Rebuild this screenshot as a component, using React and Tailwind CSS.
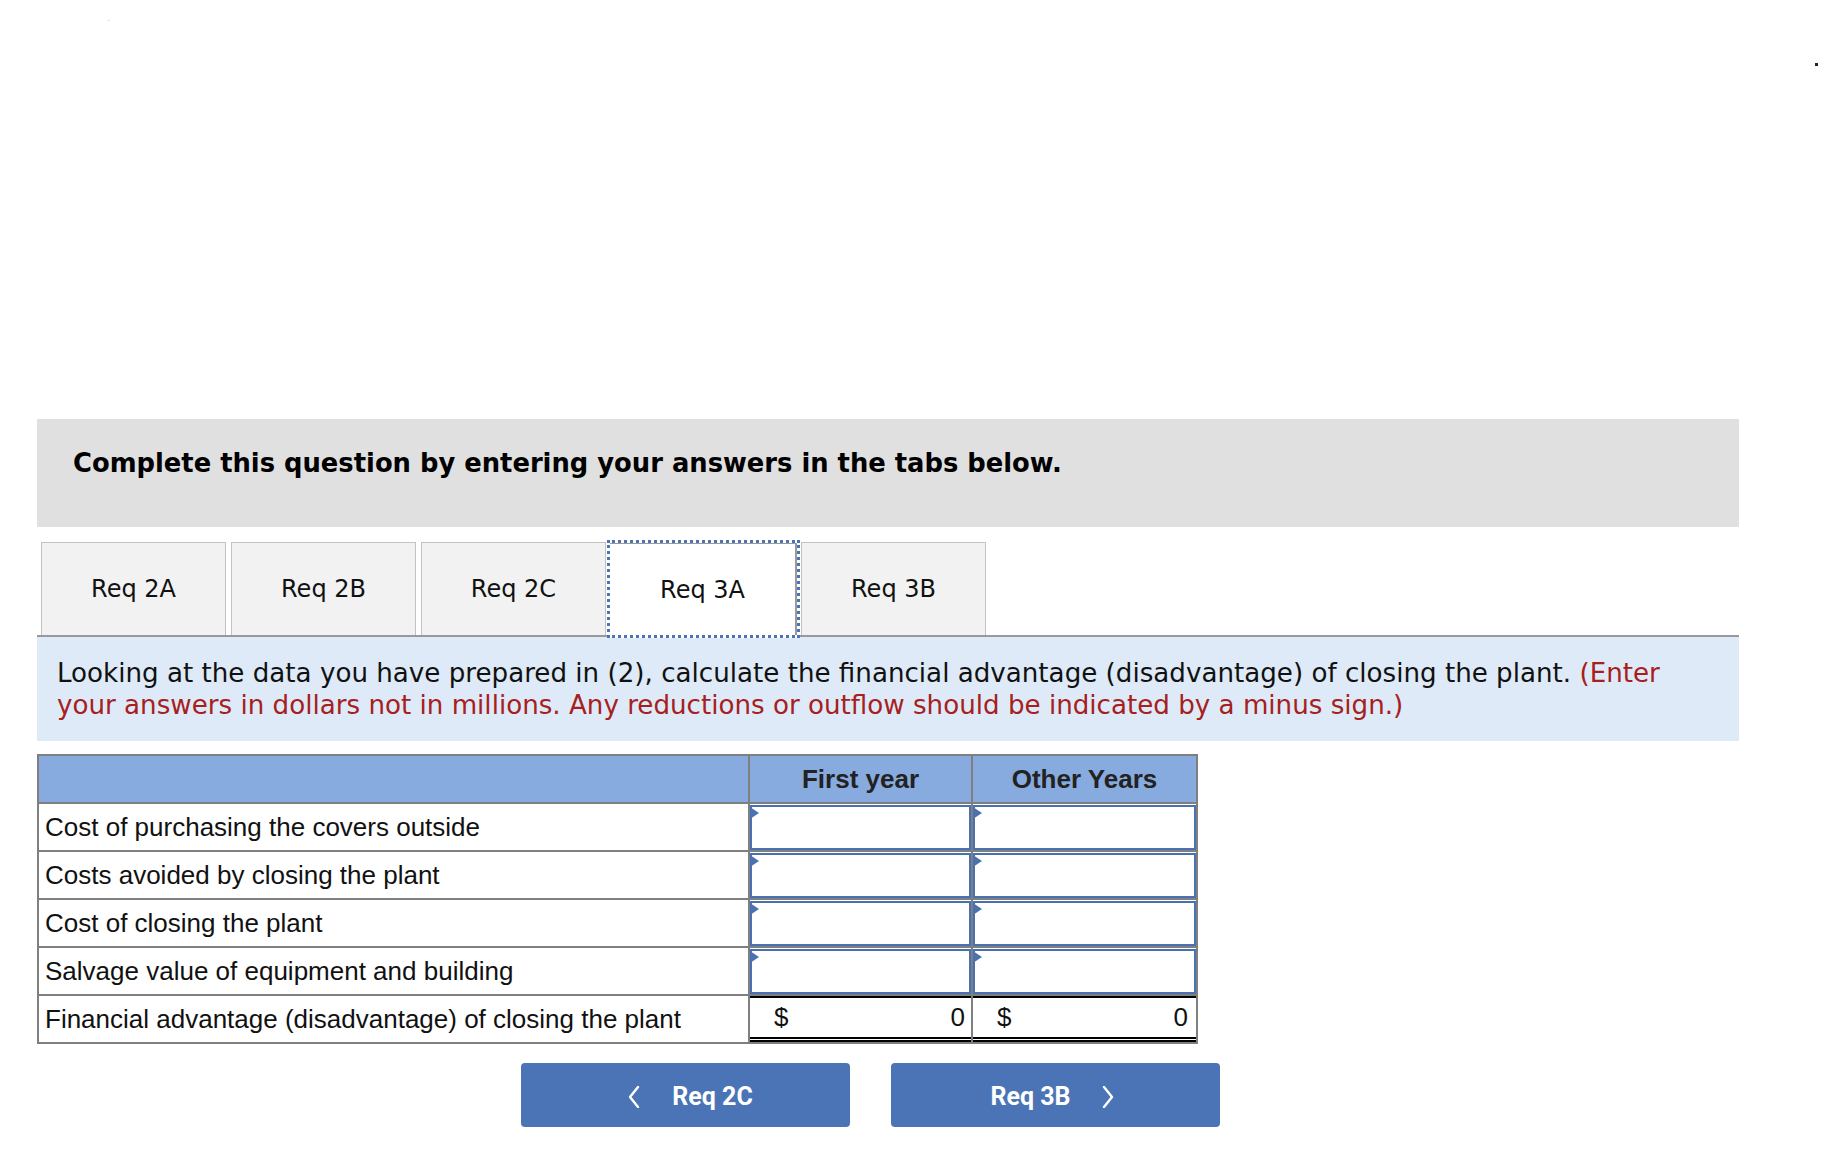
import React from 'react';

const verdana = { fontFamily: '"DejaVu Sans", Verdana, sans-serif' };
const arial = { fontFamily: '"Liberation Sans", Arial, sans-serif' };
const roboto = { fontFamily: 'Roboto, "Liberation Sans", sans-serif' };

const rows = [
  'Cost of purchasing the covers outside',
  'Costs avoided by closing the plant',
  'Cost of closing the plant',
  'Salvage value of equipment and building',
];

const Chevron = ({ dir }) => (
  <svg width="12" height="22" viewBox="0 0 12 22" fill="none">
    <polyline
      points={dir === 'left' ? '10,1 2,11 10,21' : '2,1 10,11 2,21'}
      stroke="white"
      strokeWidth="2.4"
      strokeLinecap="round"
      strokeLinejoin="round"
    />
  </svg>
);

const InputCell = () => (
  <td className="border-2 border-[#7f7f7f] p-0 h-[48px]">
    <div className="relative h-[45px] border-2 border-[#4a72b3] bg-white">
      <div className="absolute top-0 -left-[2px] w-0 h-0 border-y-[6px] border-y-transparent border-l-[9px] border-l-[#4a72b3]"></div>
    </div>
  </td>
);

const TotalCell = ({ pr }) => (
  <td className="border-2 border-[#7f7f7f] p-0 h-[48px]">
    <div className={`h-[46px] border-t-2 border-black border-b-[5px] border-b-black border-double flex items-center justify-between pl-[24px] text-[26px] text-[#111] ${pr}`}>
      <span>$</span>
      <span>0</span>
    </div>
  </td>
);

export default function App() {
  return (
    <div className="relative min-h-screen bg-white">
      <div className="absolute left-[107px] top-[20px] w-[3px] h-[1px] bg-[#e6e6e6]"></div>
      <div className="absolute left-[1815px] top-[63px] w-[3px] h-[3px] bg-[#222]"></div>

      <div className="pt-[419px] pl-[37px] w-[1739px]">
        {/* Instructions */}
        <div className="h-[108px] bg-[#e0e0e0] pl-[36px] pt-[30px]">
          <p className="text-[25.8px] leading-[29px] font-bold text-black" style={verdana}>
            Complete this question by entering your answers in the tabs below.
          </p>
        </div>

        {/* Tabs */}
        <div className="flex items-end pl-[4px] mt-[15px] h-[93px]" style={verdana}>
          <div className="w-[185px] h-[93px] border border-b-0 border-[#c2c2c2] bg-[#f2f2f2] flex items-center justify-center text-[24px] text-[#111]">
            Req 2A
          </div>
          <div className="ml-[5px] w-[185px] h-[93px] border border-b-0 border-[#c2c2c2] bg-[#f2f2f2] flex items-center justify-center text-[24px] text-[#111]">
            Req 2B
          </div>
          <div className="ml-[5px] w-[185px] h-[93px] border border-b-0 border-[#c2c2c2] bg-[#f2f2f2] flex items-center justify-center text-[24px] text-[#111]">
            Req 2C
          </div>
          <div className="relative z-10 ml-[1px] w-[193px] h-[98px] -mb-[3px] border-[3px] border-dotted border-[#4a74b5] bg-white">
            <div className="h-full border-r-2 border-t border-[#9a9a9a] flex items-center justify-center text-[24px] text-[#111]">
              Req 3A
            </div>
          </div>
          <div className="ml-[1px] w-[185px] h-[93px] border border-b-0 border-[#c2c2c2] bg-[#f2f2f2] flex items-center justify-center text-[24px] text-[#111]">
            Req 3B
          </div>
        </div>

        {/* Question */}
        <div className="h-[106px] border-t-2 border-[#999] bg-[#deeaf7] pl-[20px] pr-[40px] pt-[20px]">
          <p className="text-[26.15px] leading-[32px] text-[#111]" style={verdana}>
            Looking at the data you have prepared in (2), calculate the financial advantage (disadvantage) of closing the plant.{' '}
            <span className="text-[#a6201d]">
              (Enter your answers in dollars not in millions. Any reductions or outflow should be indicated by a minus sign.)
            </span>
          </p>
        </div>

        {/* Table */}
        <table className="mt-[13px] w-[1159px] table-fixed border-collapse border-2 border-[#7f7f7f]" style={arial}>
          <colgroup>
            <col className="w-[711px]" />
            <col className="w-[223px]" />
            <col className="w-[225px]" />
          </colgroup>
          <thead>
            <tr className="bg-[#87abdf] h-[48px]">
              <th className="border-2 border-[#7f7f7f]"></th>
              <th className="border-2 border-[#7f7f7f] text-[26px] font-bold text-[#222] text-center">First year</th>
              <th className="border-2 border-[#7f7f7f] text-[26px] font-bold text-[#222] text-center">Other Years</th>
            </tr>
          </thead>
          <tbody>
            {rows.map((label) => (
              <tr key={label}>
                <td className="border-2 border-[#7f7f7f] h-[48px] pl-[6px] text-[26px] text-[#111]">{label}</td>
                <InputCell />
                <InputCell />
              </tr>
            ))}
            <tr>
              <td className="border-2 border-[#7f7f7f] h-[48px] pl-[6px] text-[26px] text-[#111]">
                Financial advantage (disadvantage) of closing the plant
              </td>
              <TotalCell pr="pr-[6px]" />
              <TotalCell pr="pr-[8px]" />
            </tr>
          </tbody>
        </table>

        {/* Navigation */}
        <div className="flex mt-[19px] ml-[484px] gap-[41px]" style={roboto}>
          <button className="w-[329px] h-[64px] rounded-[4px] bg-[#4a74b5] flex items-center justify-center gap-[32px] pl-[10px] pt-[3px] text-white text-[25px] font-bold">
            <Chevron dir="left" />
            <span>Req 2C</span>
          </button>
          <button className="w-[329px] h-[64px] rounded-[4px] bg-[#4a74b5] flex items-center justify-center gap-[31px] pr-[7px] pt-[3px] text-white text-[25px] font-bold">
            <span>Req 3B</span>
            <Chevron dir="right" />
          </button>
        </div>
      </div>
    </div>
  );
}
